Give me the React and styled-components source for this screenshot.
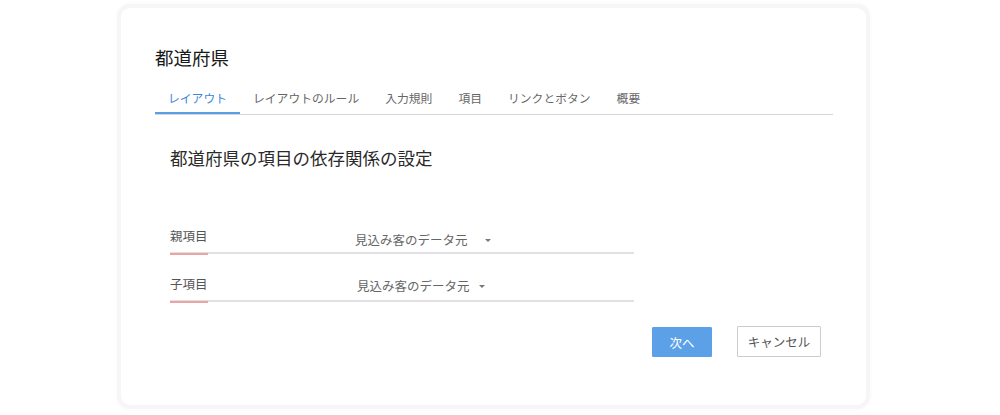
import styled, { createGlobalStyle } from 'styled-components'

const GlobalStyle = createGlobalStyle`
  html, body {
    margin: 0;
    padding: 0;
    background: #ffffff;
  }
  body {
    font-family: "Noto Sans CJK JP", "Noto Sans", "Liberation Sans", sans-serif;
    color: #333;
  }
`

const Page = styled.div`
  width: 1000px;
  height: 415px;
  padding: 8px 0 0 121px;
  box-sizing: border-box;
`

const Card = styled.div`
  width: 745px;
  height: 397px;
  box-sizing: border-box;
  padding: 37px 33px 0 34px;
  background: #fff;
  border-radius: 9px;
  box-shadow: 0 0 0 4px #f7f5f7, 0 0 4px 5px #fbfafb;
`

const Title = styled.h1`
  margin: 0;
  font-size: 18.5px;
  line-height: 24px;
  font-weight: 400;
  color: #1a1a1a;
`

const TabBar = styled.div`
  display: flex;
  margin-top: 13px;
  border-bottom: 1px solid #d4d4d4;
`

const Tab = styled.div`
  height: 32px;
  line-height: 32px;
  padding: 0 13px;
  font-size: 11.8px;
  color: ${p => (p.$active ? '#3b87db' : '#666')};
  box-shadow: ${p => (p.$active ? 'inset 0 -2px 0 #5a9fe6' : 'none')};
  white-space: nowrap;
`

const Heading = styled.h2`
  margin: 31px 0 0 15px;
  font-size: 17.5px;
  line-height: 24px;
  font-weight: 400;
  color: #2a2a2a;
`

const Form = styled.div`
  display: flex;
  flex-direction: column;
  gap: 16px;
  width: 464px;
  margin: 52px 0 0 15px;
`

const Row = styled.div`
  display: flex;
  height: 30px;
  border-bottom: 2px solid #e2e0e2;
`

const LabelCell = styled.div`
  width: 185px;
  flex: none;
`

const Label = styled.div`
  display: inline-block;
  height: 100%;
  line-height: 26px;
  font-size: 12.5px;
  color: #555;
  border-bottom: 2px solid #eba3a3;
  margin-bottom: -2px;
`

const Select = styled.div`
  display: flex;
  align-items: center;
  height: 24px;
  margin-top: ${p => p.$offset}px;
  margin-left: ${p => p.$indent}px;
  font-size: 12.5px;
  color: #666;
`

const Caret = styled.span`
  width: 0;
  height: 0;
  margin-left: ${p => p.$gap}px;
  margin-top: 3px;
  border-left: 3px solid transparent;
  border-right: 3px solid transparent;
  border-top: 3px solid #777;
`

const Actions = styled.div`
  display: flex;
  justify-content: flex-end;
  align-items: flex-start;
  gap: 25px;
  margin: 24px 12px 0 0;
`

const Button = styled.button`
  height: ${p => (p.$primary ? 30 : 31)}px;
  width: ${p => (p.$primary ? 60 : 84)}px;
  margin-top: ${p => (p.$primary ? 1 : 0)}px;
  padding: 0;
  box-sizing: border-box;
  font-family: inherit;
  font-size: 12.5px;
  border-radius: 1px;
  border: 1px solid ${p => (p.$primary ? '#5ca1e7' : '#cccccc')};
  background: ${p => (p.$primary ? '#5ca1e7' : '#ffffff')};
  color: ${p => (p.$primary ? '#ffffff' : '#555')};
  cursor: pointer;
`

const tabs = ['レイアウト', 'レイアウトのルール', '入力規則', '項目', 'リンクとボタン', '概要']

const fields = [
  { label: '親項目', value: '見込み客のデータ元', offset: 5, indent: 0, gap: 17 },
  { label: '子項目', value: '見込み客のデータ元', offset: 3, indent: 2, gap: 9 },
]

export default function App() {
  return (
    <>
      <GlobalStyle />
      <Page>
        <Card>
          <Title>都道府県</Title>
          <TabBar>
            {tabs.map((t, i) => (
              <Tab key={t} $active={i === 0}>{t}</Tab>
            ))}
          </TabBar>
          <Heading>都道府県の項目の依存関係の設定</Heading>
          <Form>
            {fields.map(f => (
              <Row key={f.label}>
                <LabelCell>
                  <Label>{f.label}</Label>
                </LabelCell>
                <Select $offset={f.offset} $indent={f.indent}>
                  {f.value}
                  <Caret $gap={f.gap} />
                </Select>
              </Row>
            ))}
          </Form>
          <Actions>
            <Button $primary>次へ</Button>
            <Button>キャンセル</Button>
          </Actions>
        </Card>
      </Page>
    </>
  )
}
